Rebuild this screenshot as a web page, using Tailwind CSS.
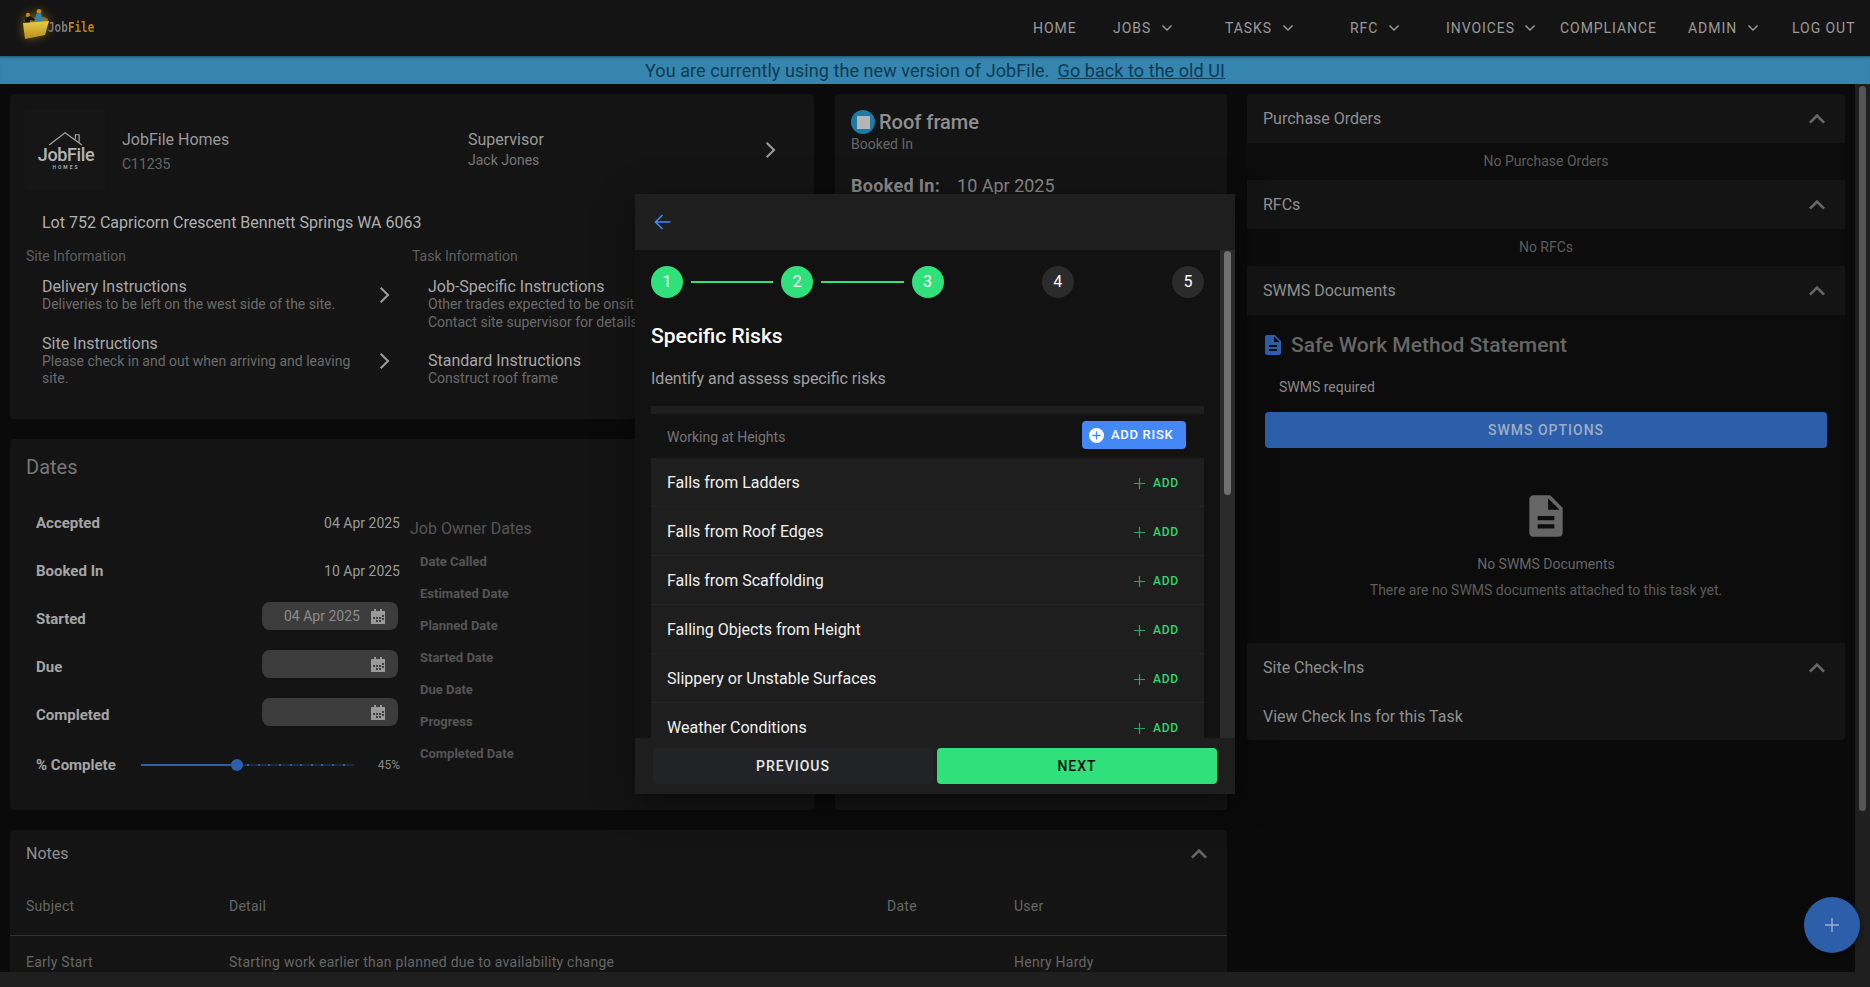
<!DOCTYPE html>
<html lang="en">
<head>
  <meta charset="UTF-8">
  <meta name="viewport" content="width=device-width, initial-scale=1">
  <title>JobFile - Roof frame</title>
  <script src="https://cdn.jsdelivr.net/npm/@tailwindcss/browser@4"></script>
</head>
<body class="relative flex h-[987px] w-[1870px] flex-col overflow-hidden bg-[#0a0a0a] font-['Roboto',sans-serif] text-[#8f8f8f]">

  <!-- top nav -->
  <nav class="flex h-[56px] shrink-0 items-center bg-[#141414] text-[14px] tracking-[0.95px] text-[#9a9a9a]">
    <div class="ml-[20px] flex items-center">
      <svg width="32" height="34" viewBox="0 0 32 34" class="mb-[8px] shrink-0 drop-shadow-[0_0_5px_rgba(230,170,30,0.5)]">
        <defs><linearGradient id="folder" x1="0" y1="0" x2="0" y2="1"><stop offset="0" stop-color="#e8cb4a"/><stop offset="1" stop-color="#b8901c"/></linearGradient></defs>
        <path d="M4 13l5-2 15-1 4 2-1 8-20 4z" fill="#8f7418"/>
        <circle cx="8" cy="8" r="2.200" fill="#c98a14"/>
        <path d="M4 18l1-7 5-2 5 3-1 2-4-1v5z" fill="#14161a"/>
        <circle cx="19" cy="4.500" r="2.400" fill="#c98a14"/>
        <path d="M15 15l1-8 5-1 2 8z" fill="#2788b5"/>
        <path d="M3 16l26-2-4 14-20 4z" fill="url(#folder)"/>
      </svg>
      <span class="ml-[-4px] inline-block scale-y-125 pt-[1px] font-['DejaVu_Sans_Mono',monospace] text-[11px] font-bold tracking-[0px]"><span class="text-[#777]">Job</span><span class="text-[#c27f0c]">File</span></span>
    </div>
    <div class="ml-auto flex h-full items-center">
      <a class="w-[80px]">HOME</a>
      <a class="flex w-[112px] items-center">JOBS<svg width="20" height="20" viewBox="0 0 24 24" fill="none" stroke="currentColor" stroke-width="1.7" class="ml-[6px]"><path d="M6.5 9l5.5 5.5L17.500 9"/></svg></a>
      <a class="flex w-[125px] items-center">TASKS<svg width="20" height="20" viewBox="0 0 24 24" fill="none" stroke="currentColor" stroke-width="1.7" class="ml-[6px]"><path d="M6.5 9l5.5 5.5L17.500 9"/></svg></a>
      <a class="flex w-[96px] items-center">RFC<svg width="20" height="20" viewBox="0 0 24 24" fill="none" stroke="currentColor" stroke-width="1.7" class="ml-[6px]"><path d="M6.5 9l5.5 5.5L17.500 9"/></svg></a>
      <a class="flex w-[114px] items-center">INVOICES<svg width="20" height="20" viewBox="0 0 24 24" fill="none" stroke="currentColor" stroke-width="1.7" class="ml-[5px]"><path d="M6.5 9l5.5 5.5L17.500 9"/></svg></a>
      <a class="w-[128px]">COMPLIANCE</a>
      <a class="flex w-[104px] items-center">ADMIN<svg width="20" height="20" viewBox="0 0 24 24" fill="none" stroke="currentColor" stroke-width="1.7" class="ml-[6px]"><path d="M6.5 9l5.5 5.5L17.500 9"/></svg></a>
      <a class="w-[78px]">LOG OUT</a>
    </div>
  </nav>

  <!-- version banner -->
  <div class="flex h-[28px] shrink-0 items-center justify-center bg-[#3585ae] text-[18px] tracking-[0.07px] text-[#0e3a52] shadow-[inset_0_3px_3px_-2px_rgba(0,0,0,0.4)]">
    <span>You are currently using the new version of JobFile.</span>
    <a class="ml-[8px] underline">Go back to the old UI</a>
  </div>

  <div class="flex min-h-0 flex-1">
    <div class="flex min-w-0 flex-1 flex-col">
      <main class="flex min-h-0 flex-1 gap-[20px] overflow-hidden pl-[10px] pt-[10px]">

        <!-- left area -->
        <div class="w-[1217px] shrink-0">
          <div class="flex gap-[21px]">
            <div class="w-[804px] shrink-0">

              <!-- job card -->
              <section class="h-[325px] rounded-[4px] bg-[#141414] pt-[16px]">
                <div class="flex h-[80px] pl-[16px]">
                  <div class="flex w-[80px] flex-col items-center justify-center bg-[#161616] pt-[2px] text-[#a5a5a5]">
                    <svg width="38" height="15" viewBox="0 0 38 16" fill="none" stroke="currentColor" stroke-width="1.3"><path d="M1 15L18 2l18 13"/><path d="M29 9V4h4v8"/></svg>
                    <span class="mt-[-2px] text-[18px] leading-[22px] font-medium tracking-[-0.4px] text-[#b5b5b5]">JobFile</span>
                    <span class="mt-[-2px] text-[5px] leading-[7px] font-bold tracking-[2px]">HOMES</span>
                  </div>
                  <div class="ml-[16px] flex w-[346px] flex-col justify-center pt-[3px]">
                    <span class="text-[16px] leading-[24px] text-[#9a9a9a]">JobFile Homes</span>
                    <span class="text-[14px] leading-[24px] text-[#666]">C11235</span>
                  </div>
                  <div class="flex w-[296px] flex-col justify-center">
                    <span class="text-[16px] leading-[20px] text-[#9a9a9a]">Supervisor</span>
                    <span class="text-[14px] leading-[20px] text-[#777]">Jack Jones</span>
                  </div>
                  <svg width="32" height="32" viewBox="0 0 24 24" fill="none" stroke="#999" stroke-width="1.6" class="ml-[-10px] self-center"><path d="M9.500 6.500L15 12l-5.500 5.500"/></svg>
                </div>
                <p class="mt-[21px] pl-[32px] text-[16px] leading-[24px] text-[#b0b0b0]">Lot 752 Capricorn Crescent Bennett Springs WA 6063</p>
                <div class="mt-[11px] flex pl-[16px]">
                  <div class="w-[386px]">
                    <h3 class="text-[14px] leading-[20px] text-[#5f5f5f]">Site Information</h3>
                    <div class="mt-[11px] flex items-center pl-[16px]">
                      <div class="w-[322px]">
                        <div class="text-[16px] leading-[19px] text-[#a8a8a8]">Delivery Instructions</div>
                        <div class="text-[14px] leading-[17.5px] text-[#6b6b6b]">Deliveries to be left on the west side of the site.</div>
                      </div>
                      <svg width="32" height="32" viewBox="0 0 24 24" fill="none" stroke="#999" stroke-width="1.6" class="ml-[4px]"><path d="M9.500 6.500L15 12l-5.500 5.500"/></svg>
                    </div>
                    <div class="mt-[20px] flex items-center pl-[16px]">
                      <div class="w-[322px]">
                        <div class="text-[16px] leading-[19px] text-[#a8a8a8]">Site Instructions</div>
                        <div class="text-[14px] leading-[17.5px] text-[#6b6b6b]">Please check in and out when arriving and leaving site.</div>
                      </div>
                      <svg width="32" height="32" viewBox="0 0 24 24" fill="none" stroke="#999" stroke-width="1.6" class="ml-[4px]"><path d="M9.500 6.500L15 12l-5.500 5.500"/></svg>
                    </div>
                  </div>
                  <div class="flex-1">
                    <h3 class="text-[14px] leading-[20px] text-[#5f5f5f]">Task Information</h3>
                    <div class="mt-[11px] pl-[16px]">
                      <div class="text-[16px] leading-[19px] text-[#a8a8a8]">Job-Specific Instructions</div>
                      <div class="text-[14px] leading-[17.5px] text-[#6b6b6b]">Other trades expected to be onsite.<br>Contact site supervisor for details.</div>
                    </div>
                    <div class="mt-[20px] pl-[16px]">
                      <div class="text-[16px] leading-[19px] text-[#a8a8a8]">Standard Instructions</div>
                      <div class="text-[14px] leading-[17.5px] text-[#6b6b6b]">Construct roof frame</div>
                    </div>
                  </div>
                </div>
              </section>

              <!-- dates card -->
              <section class="mt-[20px] h-[371px] rounded-[4px] bg-[#141414] pl-[16px] pt-[14px]">
                <h2 class="text-[20px] leading-[28px] text-[#777]">Dates</h2>
                <div class="mt-[18px] flex">
                  <div class="w-[374px] shrink-0 pl-[10px] text-[14px]">
                    <div class="flex h-[48px] items-center justify-between"><b class="text-[15px] font-bold text-[#a5a5a5]">Accepted</b><span class="text-[#999]">04 Apr 2025</span></div>
                    <div class="flex h-[48px] items-center justify-between"><b class="text-[15px] font-bold text-[#a5a5a5]">Booked In</b><span class="text-[#999]">10 Apr 2025</span></div>
                    <div class="flex h-[48px] items-center justify-between">
                      <b class="text-[15px] font-bold text-[#a5a5a5]">Started</b>
                      <div class="mb-[6px] mr-[2px] flex h-[28px] w-[136px] items-center justify-between rounded-[8px] bg-[#3c3c3c] pl-[22px] pr-[13px] text-[#8c8c8c]">
                        <span>04 Apr 2025</span>
                        <svg width="14" height="16" viewBox="0 0 14 16"><path d="M0 3h3V1h2v2h4V1h2v2h3v13H0z" fill="#9a9a9a"/><path d="M2 9h2v2H2zM5 9h2v2H5zM8 9h2v2H8zM11 7h2v2h-2zM8 12h2v2H8zM5 12h2v2H5zM11 10h2v2h-2z" fill="#3c3c3c"/></svg>
                      </div>
                    </div>
                    <div class="flex h-[48px] items-center justify-between">
                      <b class="text-[15px] font-bold text-[#a5a5a5]">Due</b>
                      <div class="mb-[6px] mr-[2px] flex h-[28px] w-[136px] items-center justify-end rounded-[8px] bg-[#3c3c3c] pr-[13px]">
                        <svg width="14" height="16" viewBox="0 0 14 16"><path d="M0 3h3V1h2v2h4V1h2v2h3v13H0z" fill="#9a9a9a"/><path d="M2 9h2v2H2zM5 9h2v2H5zM8 9h2v2H8zM11 7h2v2h-2zM8 12h2v2H8zM5 12h2v2H5zM11 10h2v2h-2z" fill="#3c3c3c"/></svg>
                      </div>
                    </div>
                    <div class="flex h-[48px] items-center justify-between">
                      <b class="text-[15px] font-bold text-[#a5a5a5]">Completed</b>
                      <div class="mb-[6px] mr-[2px] flex h-[28px] w-[136px] items-center justify-end rounded-[8px] bg-[#3c3c3c] pr-[13px]">
                        <svg width="14" height="16" viewBox="0 0 14 16"><path d="M0 3h3V1h2v2h4V1h2v2h3v13H0z" fill="#9a9a9a"/><path d="M2 9h2v2H2zM5 9h2v2H5zM8 9h2v2H8zM11 7h2v2h-2zM8 12h2v2H8zM5 12h2v2H5zM11 10h2v2h-2z" fill="#3c3c3c"/></svg>
                      </div>
                    </div>
                    <div class="mt-[14px] flex h-[24px] items-center">
                      <b class="w-[105px] shrink-0 text-[15px] font-bold text-[#a5a5a5]">% Complete</b>
                      <div class="relative flex h-[12px] w-[213px] shrink-0 items-center bg-[linear-gradient(#1c2a40,#1c2a40)] bg-[length:100%_2px] bg-center bg-no-repeat">
                        <div class="h-[2px] w-[96px] bg-[#2c5ea9]"></div>
                        <div class="absolute left-[90px] top-0 h-[12px] w-[12px] rounded-full bg-[#2c5ea9]"></div>
                        <div class="absolute left-[106px] top-[5px] flex gap-[8.65px]">
                          <i class="h-[2px] w-[2px] bg-[#2c5ea9]"></i><i class="h-[2px] w-[2px] bg-[#2c5ea9]"></i><i class="h-[2px] w-[2px] bg-[#2c5ea9]"></i><i class="h-[2px] w-[2px] bg-[#2c5ea9]"></i><i class="h-[2px] w-[2px] bg-[#2c5ea9]"></i><i class="h-[2px] w-[2px] bg-[#2c5ea9]"></i><i class="h-[2px] w-[2px] bg-[#2c5ea9]"></i><i class="h-[2px] w-[2px] bg-[#2c5ea9]"></i><i class="h-[2px] w-[2px] bg-[#2c5ea9]"></i><i class="h-[2px] w-[2px] bg-[#2c5ea9]"></i>
                        </div>
                      </div>
                      <span class="flex-1 text-right text-[12px] text-[#888]">45%</span>
                    </div>
                  </div>
                  <div class="pl-[10px] pt-[20px]">
                    <h3 class="text-[16px] leading-[20px] text-[#555]">Job Owner Dates</h3>
                    <ul class="mt-[7px] pl-[10px] text-[13px] font-bold text-[#555]">
                      <li class="flex h-[32px] items-center">Date Called</li>
                      <li class="flex h-[32px] items-center">Estimated Date</li>
                      <li class="flex h-[32px] items-center">Planned Date</li>
                      <li class="flex h-[32px] items-center">Started Date</li>
                      <li class="flex h-[32px] items-center">Due Date</li>
                      <li class="flex h-[32px] items-center">Progress</li>
                      <li class="flex h-[32px] items-center">Completed Date</li>
                    </ul>
                  </div>
                </div>
              </section>
            </div>

            <!-- task card -->
            <section class="h-[716px] w-[392px] shrink-0 rounded-[4px] bg-[#141414] pl-[16px] pt-[16px]">
              <div class="flex h-[24px] items-center">
                <div class="flex h-[24px] w-[24px] items-center justify-center rounded-full bg-[#1c7aa6]"><div class="h-[13px] w-[13px] bg-[#b5b5b5]"></div></div>
                <h2 class="ml-[4px] text-[20px] font-medium text-[#8f8f8f]">Roof frame</h2>
              </div>
              <p class="text-[14px] leading-[20px] text-[#666]">Booked In</p>
              <p class="mt-[21px] text-[18px] leading-[21px] text-[#8a8a8a]"><b class="font-bold tracking-[0.3px]">Booked In:</b><span class="ml-[17px]">10 Apr 2025</span></p>
            </section>
          </div>

          <!-- notes -->
          <section class="mt-[20px] rounded-[4px] bg-[#141414]">
            <div class="flex h-[48px] items-center justify-between pl-[16px] pr-[12px]">
              <h2 class="text-[16px] text-[#8f8f8f]">Notes</h2>
              <svg width="32" height="32" viewBox="0 0 24 24" fill="#666"><path d="M12 8l-6 6 1.41 1.41L12 10.83l4.59 4.58L18 14z"/></svg>
            </div>
            <div class="flex h-[58px] items-center border-b border-[#333] text-[14px] tracking-[0.25px] text-[#666]">
              <span class="w-[219px] pl-[16px]">Subject</span><span class="w-[658px]">Detail</span><span class="w-[127px]">Date</span><span>User</span>
            </div>
            <div class="flex h-[53px] items-center text-[14px] tracking-[0.25px] text-[#666]">
              <span class="w-[219px] pl-[16px]">Early Start</span><span class="w-[785px]">Starting work earlier than planned due to availability change</span><span>Henry Hardy</span>
            </div>
          </section>
        </div>

        <!-- right column -->
        <aside class="w-[598px] shrink-0">
          <div class="flex h-[49px] items-center justify-between rounded-t-[4px] bg-[#141414] pl-[16px] pr-[12px]">
            <h2 class="text-[16px] text-[#8f8f8f]">Purchase Orders</h2>
            <svg width="32" height="32" viewBox="0 0 24 24" fill="#666"><path d="M12 8l-6 6 1.41 1.41L12 10.83l4.59 4.58L18 14z"/></svg>
          </div>
          <p class="flex h-[37px] items-center justify-center bg-[#0c0c0c] text-[14px] text-[#5c5c5c]">No Purchase Orders</p>
          <div class="flex h-[49px] items-center justify-between bg-[#141414] pl-[16px] pr-[12px]">
            <h2 class="text-[16px] text-[#8f8f8f]">RFCs</h2>
            <svg width="32" height="32" viewBox="0 0 24 24" fill="#666"><path d="M12 8l-6 6 1.41 1.41L12 10.83l4.59 4.58L18 14z"/></svg>
          </div>
          <p class="flex h-[37px] items-center justify-center bg-[#0c0c0c] text-[14px] text-[#5c5c5c]">No RFCs</p>
          <div class="flex h-[49px] items-center justify-between bg-[#141414] pl-[16px] pr-[12px]">
            <h2 class="text-[16px] text-[#8f8f8f]">SWMS Documents</h2>
            <svg width="32" height="32" viewBox="0 0 24 24" fill="#666"><path d="M12 8l-6 6 1.41 1.41L12 10.83l4.59 4.58L18 14z"/></svg>
          </div>
          <div class="h-[328px] bg-[#0c0c0c] px-[18px] pt-[18px]">
            <div class="flex h-[24px] items-center">
              <svg width="24" height="24" viewBox="0 0 24 24" fill="#2c5ea9" class="ml-[-4px] shrink-0"><path d="M14 2H6c-1.1 0-1.99.9-1.99 2L4 20c0 1.1.89 2 1.99 2H18c1.1 0 2-.9 2-2V8l-6-6zm2 16H8v-2h8v2zm0-4H8v-2h8v2zm-3-5V3.5L18.5 9H13z"/></svg>
              <h3 class="ml-[6px] pt-[2px] text-[21px] font-medium text-[#666]">Safe Work Method Statement</h3>
            </div>
            <p class="mt-[20px] pl-[14px] text-[14px] leading-[20px] text-[#8a8a8a]">SWMS required</p>
            <button class="mt-[15px] h-[36px] w-[562px] rounded-[4px] bg-[#2c5ea9] text-[14px] font-medium tracking-[1px] text-[#9eaec6]">SWMS OPTIONS</button>
            <div class="mt-[43px] flex flex-col items-center">
              <svg width="50" height="50" viewBox="0 0 24 24" fill="#666"><path d="M14 2H6c-1.1 0-1.99.9-1.99 2L4 20c0 1.1.89 2 1.99 2H18c1.1 0 2-.9 2-2V8l-6-6zm2 16H8v-2h8v2zm0-4H8v-2h8v2zm-3-5V3.5L18.5 9H13z"/></svg>
              <p class="mt-[13px] text-[14px] leading-[20px] text-[#666]">No SWMS Documents</p>
              <p class="mt-[6px] text-[14px] leading-[20px] text-[#5c5c5c]">There are no SWMS documents attached to this task yet.</p>
            </div>
          </div>
          <div class="flex h-[49px] items-center justify-between bg-[#141414] pl-[16px] pr-[12px]">
            <h2 class="text-[16px] text-[#8f8f8f]">Site Check-Ins</h2>
            <svg width="32" height="32" viewBox="0 0 24 24" fill="#666"><path d="M12 8l-6 6 1.41 1.41L12 10.83l4.59 4.58L18 14z"/></svg>
          </div>
          <p class="flex h-[48px] items-center rounded-b-[4px] bg-[#141414] pl-[16px] pt-[2px] text-[16px] text-[#8f8f8f]">View Check Ins for this Task</p>
        </aside>
      </main>
      <div class="h-[15px] shrink-0 bg-[#1f1f1f]"></div>
    </div>
    <div class="w-[15px] shrink-0 bg-[#1f1f1f] pl-[4px] pt-[2px]">
      <div class="h-[725px] w-[7px] rounded-full bg-[#555]"></div>
    </div>
  </div>

  <!-- risk wizard dialog -->
  <div class="absolute left-[635px] top-[194px] flex h-[600px] w-[600px] flex-col bg-[#121212] shadow-[0_8px_30px_rgba(0,0,0,0.5)]">
    <header class="flex h-[56px] shrink-0 items-center bg-[#1e1e1e] pl-[18px]">
      <svg width="20" height="20" viewBox="0 0 20 20" fill="none" stroke="#4488f8" stroke-width="1.6"><path d="M17.500 10H2.500M9.500 3l-7 7 7 7"/></svg>
    </header>
    <div class="flex min-h-0 flex-1">
      <div class="min-w-0 flex-1 overflow-hidden pl-[16px] pr-[16px] pt-[16px]">
        <div class="flex h-[32px] items-center text-[16px]">
          <span class="flex h-[32px] w-[32px] shrink-0 items-center justify-center rounded-full bg-[#30e07a] text-white">1</span>
          <span class="mx-[8px] h-[2px] flex-1 bg-[#30e07a]"></span>
          <span class="flex h-[32px] w-[32px] shrink-0 items-center justify-center rounded-full bg-[#30e07a] text-white">2</span>
          <span class="mx-[8px] h-[2px] flex-1 bg-[#30e07a]"></span>
          <span class="flex h-[32px] w-[32px] shrink-0 items-center justify-center rounded-full bg-[#30e07a] text-white">3</span>
          <span class="mx-[8px] h-[2px] flex-1"></span>
          <span class="flex h-[32px] w-[32px] shrink-0 items-center justify-center rounded-full bg-[#2b2b2b] text-white">4</span>
          <span class="mx-[8px] h-[2px] flex-1"></span>
          <span class="flex h-[32px] w-[32px] shrink-0 items-center justify-center rounded-full bg-[#2b2b2b] text-white">5</span>
        </div>
        <h2 class="mt-[24px] text-[21px] leading-[28px] font-medium text-white">Specific Risks</h2>
        <p class="mt-[17px] text-[16px] leading-[24px] text-[#a0a0a0]">Identify and assess specific risks</p>
        <div class="mt-[15px] h-[8px] bg-[#1e1e1e]"></div>
        <div class="flex h-[44px] items-center justify-between pl-[16px] pr-[18px]">
          <span class="pt-[2px] text-[14px] text-[#777]">Working at Heights</span>
          <button class="mb-[2px] flex h-[28px] w-[104px] items-center rounded-[4px] bg-[#4488f8] pl-[7px] text-[13px] font-medium tracking-[0.7px] text-white">
            <svg width="15" height="15" viewBox="0 0 15 15" class="mr-[7px]"><circle cx="7.5" cy="7.5" r="7.5" fill="#fff"/><path d="M7.5 3.5v8M3.5 7.5h8" stroke="#4488f8" stroke-width="1.3"/></svg>
            ADD RISK
          </button>
        </div>
        <ul class="bg-[#1e1e1e] text-[16px] text-[#f0f0f0]">
          <li class="flex h-[49px] items-center justify-between border-b border-[#252525] pl-[16px] pr-[25px] pt-[2px]">Falls from Ladders<span class="flex items-center text-[12px] font-medium tracking-[0.8px] text-[#2fd672]"><svg width="11" height="11" viewBox="0 0 11 11" stroke="#26a85c" stroke-width="1.2" class="mr-[8px]"><path d="M5.5 0v11M0 5.5h11"/></svg>ADD</span></li>
          <li class="flex h-[49px] items-center justify-between border-b border-[#252525] pl-[16px] pr-[25px] pt-[2px]">Falls from Roof Edges<span class="flex items-center text-[12px] font-medium tracking-[0.8px] text-[#2fd672]"><svg width="11" height="11" viewBox="0 0 11 11" stroke="#26a85c" stroke-width="1.2" class="mr-[8px]"><path d="M5.5 0v11M0 5.5h11"/></svg>ADD</span></li>
          <li class="flex h-[49px] items-center justify-between border-b border-[#252525] pl-[16px] pr-[25px] pt-[2px]">Falls from Scaffolding<span class="flex items-center text-[12px] font-medium tracking-[0.8px] text-[#2fd672]"><svg width="11" height="11" viewBox="0 0 11 11" stroke="#26a85c" stroke-width="1.2" class="mr-[8px]"><path d="M5.5 0v11M0 5.5h11"/></svg>ADD</span></li>
          <li class="flex h-[49px] items-center justify-between border-b border-[#252525] pl-[16px] pr-[25px] pt-[2px]">Falling Objects from Height<span class="flex items-center text-[12px] font-medium tracking-[0.8px] text-[#2fd672]"><svg width="11" height="11" viewBox="0 0 11 11" stroke="#26a85c" stroke-width="1.2" class="mr-[8px]"><path d="M5.5 0v11M0 5.5h11"/></svg>ADD</span></li>
          <li class="flex h-[49px] items-center justify-between border-b border-[#252525] pl-[16px] pr-[25px] pt-[2px]">Slippery or Unstable Surfaces<span class="flex items-center text-[12px] font-medium tracking-[0.8px] text-[#2fd672]"><svg width="11" height="11" viewBox="0 0 11 11" stroke="#26a85c" stroke-width="1.2" class="mr-[8px]"><path d="M5.5 0v11M0 5.5h11"/></svg>ADD</span></li>
          <li class="flex h-[49px] items-center justify-between border-b border-[#252525] pl-[16px] pr-[25px] pt-[2px]">Weather Conditions<span class="flex items-center text-[12px] font-medium tracking-[0.8px] text-[#2fd672]"><svg width="11" height="11" viewBox="0 0 11 11" stroke="#26a85c" stroke-width="1.2" class="mr-[8px]"><path d="M5.5 0v11M0 5.5h11"/></svg>ADD</span></li>
        </ul>
      </div>
      <div class="w-[15px] shrink-0 bg-[#2a2a2a] pl-[4px] pt-px">
        <div class="h-[244px] w-[7px] rounded-full bg-[#707070]"></div>
      </div>
    </div>
    <footer class="flex h-[56px] shrink-0 items-center gap-[4px] bg-[#1e1e1e] pl-[18px] pr-[18px] text-[14px] font-medium tracking-[1px]">
      <button class="h-[36px] flex-1 rounded-[4px] bg-[#212327] text-[#e8e8e8]">PREVIOUS</button>
      <button class="h-[36px] flex-1 rounded-[4px] bg-[#30e07a] text-[#0a0a0a]">NEXT</button>
    </footer>
  </div>

  <!-- floating add button -->
  <button class="absolute left-[1804px] top-[897px] flex h-[56px] w-[56px] items-center justify-center rounded-full bg-[#2c5ea9] shadow-[0_3px_8px_rgba(0,0,0,0.4)]">
    <svg width="14" height="14" viewBox="0 0 14 14" stroke="#9eaec6" stroke-width="1.4"><path d="M7 0v14M0 7h14"/></svg>
  </button>
</body>
</html>
